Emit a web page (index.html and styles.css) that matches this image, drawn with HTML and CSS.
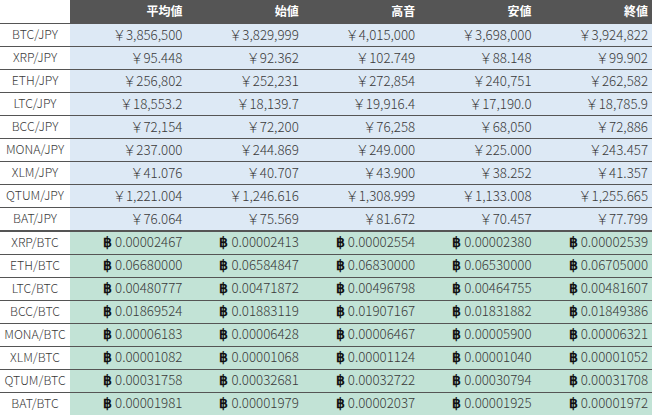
FILE: index.html
```html
<!DOCTYPE html>
<html lang="ja">
<head>
<meta charset="utf-8">
<link rel="stylesheet" href="styles.css">
</head>
<body>
<table class="rates">
  <thead>
    <tr><th class="blank"></th><th>平均値</th><th>始値</th><th>高音</th><th>安値</th><th>終値</th></tr>
  </thead>
  <tbody class="jpy">
    <tr><td class="pair">BTC/JPY</td><td>￥3,856,500</td><td>￥3,829,999</td><td>￥4,015,000</td><td>￥3,698,000</td><td>￥3,924,822</td></tr>
    <tr><td class="pair">XRP/JPY</td><td>￥95.448</td><td>￥92.362</td><td>￥102.749</td><td>￥88.148</td><td>￥99.902</td></tr>
    <tr><td class="pair">ETH/JPY</td><td>￥256,802</td><td>￥252,231</td><td>￥272,854</td><td>￥240,751</td><td>￥262,582</td></tr>
    <tr><td class="pair">LTC/JPY</td><td>￥18,553.2</td><td>￥18,139.7</td><td>￥19,916.4</td><td>￥17,190.0</td><td>￥18,785.9</td></tr>
    <tr><td class="pair">BCC/JPY</td><td>￥72,154</td><td>￥72,200</td><td>￥76,258</td><td>￥68,050</td><td>￥72,886</td></tr>
    <tr><td class="pair">MONA/JPY</td><td>￥237.000</td><td>￥244.869</td><td>￥249.000</td><td>￥225.000</td><td>￥243.457</td></tr>
    <tr><td class="pair">XLM/JPY</td><td>￥41.076</td><td>￥40.707</td><td>￥43.900</td><td>￥38.252</td><td>￥41.357</td></tr>
    <tr><td class="pair">QTUM/JPY</td><td>￥1,221.004</td><td>￥1,246.616</td><td>￥1,308.999</td><td>￥1,133.008</td><td>￥1,255.665</td></tr>
    <tr class="last"><td class="pair">BAT/JPY</td><td>￥76.064</td><td>￥75.569</td><td>￥81.672</td><td>￥70.457</td><td>￥77.799</td></tr>
  </tbody>
  <tbody class="btc">
    <tr><td class="pair">XRP/BTC</td><td><b>฿</b> 0.00002467</td><td><b>฿</b> 0.00002413</td><td><b>฿</b> 0.00002554</td><td><b>฿</b> 0.00002380</td><td><b>฿</b> 0.00002539</td></tr>
    <tr><td class="pair">ETH/BTC</td><td><b>฿</b> 0.06680000</td><td><b>฿</b> 0.06584847</td><td><b>฿</b> 0.06830000</td><td><b>฿</b> 0.06530000</td><td><b>฿</b> 0.06705000</td></tr>
    <tr><td class="pair">LTC/BTC</td><td><b>฿</b> 0.00480777</td><td><b>฿</b> 0.00471872</td><td><b>฿</b> 0.00496798</td><td><b>฿</b> 0.00464755</td><td><b>฿</b> 0.00481607</td></tr>
    <tr><td class="pair">BCC/BTC</td><td><b>฿</b> 0.01869524</td><td><b>฿</b> 0.01883119</td><td><b>฿</b> 0.01907167</td><td><b>฿</b> 0.01831882</td><td><b>฿</b> 0.01849386</td></tr>
    <tr><td class="pair">MONA/BTC</td><td><b>฿</b> 0.00006183</td><td><b>฿</b> 0.00006428</td><td><b>฿</b> 0.00006467</td><td><b>฿</b> 0.00005900</td><td><b>฿</b> 0.00006321</td></tr>
    <tr><td class="pair">XLM/BTC</td><td><b>฿</b> 0.00001082</td><td><b>฿</b> 0.00001068</td><td><b>฿</b> 0.00001124</td><td><b>฿</b> 0.00001040</td><td><b>฿</b> 0.00001052</td></tr>
    <tr><td class="pair">QTUM/BTC</td><td><b>฿</b> 0.00031758</td><td><b>฿</b> 0.00032681</td><td><b>฿</b> 0.00032722</td><td><b>฿</b> 0.00030794</td><td><b>฿</b> 0.00031708</td></tr>
    <tr><td class="pair">BAT/BTC</td><td><b>฿</b> 0.00001981</td><td><b>฿</b> 0.00001979</td><td><b>฿</b> 0.00002037</td><td><b>฿</b> 0.00001925</td><td><b>฿</b> 0.00001972</td></tr>
  </tbody>
</table>
</body>
</html>
```
FILE: styles.css
```css
html, body {
  margin: 0;
  padding: 0;
  background: #ffffff;
}
.rates {
  width: 652px;
  border-collapse: collapse;
  table-layout: fixed;
  font-family: "Noto Sans CJK JP", "Noto Sans", sans-serif;
  font-size: 13.3px;
  font-weight: 300;
  color: #3a3a3a;
}
.rates tr {
  height: 23px;
}
.rates th, .rates td {
  height: 22px;
  padding: 0 4px 0 0;
  text-align: right;
  vertical-align: middle;
  white-space: nowrap;
  border-bottom: 1px solid #555555;
  line-height: 1;
}
.rates th {
  background: #555555;
  color: #ffffff;
  font-weight: bold;
  font-size: 12px;
}
.rates th.blank {
  background: #ffffff;
  width: 66px;
}
.rates td.pair {
  background: #ffffff;
  text-align: center;
  padding: 0;
  font-size: 12.3px;
}
.jpy td {
  background: #dde9f5;
}
.jpy tr.last td {
  border-bottom: 2px solid #555555;
}
.btc td {
  background: #c2e3d6;
}
.btc b {
  font-family: "Roboto", sans-serif;
  color: #111111;
  font-weight: bold;
  font-size: 13.5px;
  line-height: 1;
}
```
